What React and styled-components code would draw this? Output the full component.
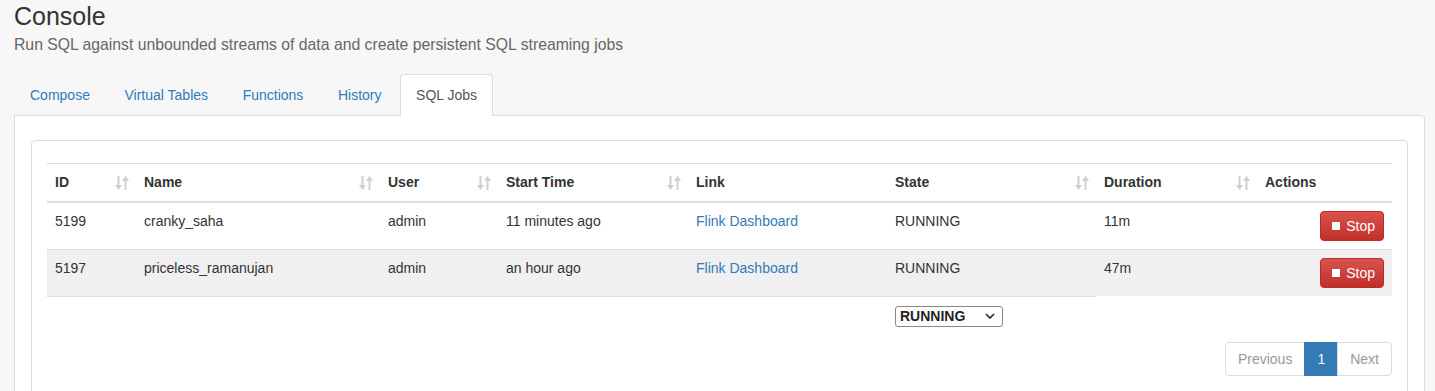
import React from "react";
import styled, { createGlobalStyle } from "styled-components";

const GlobalStyle = createGlobalStyle`
  body {
    margin: 0;
    background: #f7f7f7;
    font-family: "Liberation Sans", Arial, sans-serif;
    font-size: 14px;
    color: #333;
  }
`;

const Page = styled.div`
  padding: 0 10px 0 14px;
`;

const Title = styled.h1`
  margin: 0;
  padding-top: 2px;
  font-size: 25px;
  line-height: 28px;
  font-weight: 400;
  color: #333;
`;

const Subtitle = styled.p`
  margin: 4px 0 0;
  font-size: 15.75px;
  line-height: 22px;
  color: #666;
`;

const TabBar = styled.ul`
  display: flex;
  list-style: none;
  margin: 18px 0 0;
  padding: 0;
`;

const Tab = styled.li`
  margin-right: 2.6px;
  margin-bottom: -1px;
  padding: 10px 15px;
  line-height: 20px;
  font-size: 14px;
  border: 1px solid ${(p) => (p.$active ? "#ddd" : "transparent")};
  border-bottom-color: transparent;
  border-radius: 4px 4px 0 0;
  background: ${(p) => (p.$active ? "#fff" : "transparent")};
  color: ${(p) => (p.$active ? "#555" : "#337ab7")};
  position: relative;
  z-index: 1;
`;

const TabContent = styled.div`
  background: #fff;
  border: 1px solid #ddd;
  border-radius: 0 4px 4px 4px;
  padding: 24px 16px 30px;
`;

const Panel = styled.div`
  border: 1px solid #ddd;
  border-radius: 4px;
  padding: 22px 15px 30px;
`;

const Table = styled.table`
  width: 100%;
  border-collapse: collapse;
  table-layout: fixed;
`;

const Th = styled.th`
  position: relative;
  text-align: left;
  font-weight: 700;
  padding: 8px;
  line-height: 21px;
  border-top: 1px solid #ddd;
  border-bottom: 2px solid #ddd;
`;

const Row = styled.tr`
  background: ${(p) => (p.$striped ? "#f0f0f0" : "#fff")};
`;

const Td = styled.td`
  padding: 8px;
  line-height: 20px;
  vertical-align: top;
  border-top: 1px solid #ddd;
  text-align: ${(p) => p.$align || "left"};
`;

const FootCell = styled.td`
  padding: 9px 8px 8px;
  line-height: 20px;
  border-top: ${(p) => (p.$line ? "1px solid #ddd" : "none")};
`;

const SortIcon = styled.svg`
  position: absolute;
  right: 7px;
  top: 11px;
`;

const Link = styled.a`
  color: #337ab7;
  text-decoration: none;
`;

const StopButton = styled.button`
  display: inline-flex;
  align-items: center;
  gap: 6px;
  height: 30px;
  padding: 0 8px 0 11px;
  font-family: inherit;
  font-size: 14px;
  line-height: 20px;
  color: #fff;
  background: linear-gradient(#d9534f, #c12e2a);
  border: 1px solid #b92c28;
  border-radius: 4px;
`;

const StopSquare = styled.span`
  width: 8px;
  height: 8px;
  background: #fff;
`;

const StateSelect = styled.select`
  appearance: none;
  width: 108px;
  height: 21px;
  padding: 0 20px 0 4px;
  font-family: inherit;
  font-size: 14px;
  font-weight: 700;
  color: #222;
  border: 1px solid #888;
  border-radius: 3px;
  background: #fff url("data:image/svg+xml;utf8,<svg xmlns='http://www.w3.org/2000/svg' width='10' height='6'><path d='M1 1l4 4 4-4' fill='none' stroke='%23222' stroke-width='1.6'/></svg>") no-repeat right 7px center;
`;

const Pager = styled.div`
  display: flex;
  justify-content: flex-end;
  margin-top: 7px;
`;

const PageItem = styled.span`
  padding: 6px 12px;
  line-height: 20px;
  font-size: 14px;
  border: 1px solid ${(p) => (p.$active ? "#337ab7" : "#ddd")};
  margin-left: -1px;
  background: ${(p) => (p.$active ? "#337ab7" : "#fff")};
  color: ${(p) => (p.$active ? "#fff" : "#999")};
  &:first-child {
    border-radius: 4px 0 0 4px;
  }
  &:last-child {
    border-radius: 0 4px 4px 0;
  }
`;

const Sort = () => (
  <SortIcon width="14" height="16" viewBox="0 0 14 16">
    <rect x="2.5" y="1" width="2" height="10" fill="#cfcfcf" />
    <path d="M0 10h7l-3.5 5z" fill="#cfcfcf" />
    <rect x="9.5" y="5" width="2" height="10" fill="#cfcfcf" />
    <path d="M7 6h7L10.5 1z" fill="#cfcfcf" />
  </SortIcon>
);

const columns = [
  { label: "ID", width: 89, sort: true },
  { label: "Name", width: 244, sort: true },
  { label: "User", width: 118, sort: true },
  { label: "Start Time", width: 190, sort: true },
  { label: "Link", width: 199 },
  { label: "State", width: 209, sort: true },
  { label: "Duration", width: 161, sort: true },
  { label: "Actions", width: 135 },
];

const jobs = [
  { id: 5199, name: "cranky_saha", user: "admin", start: "11 minutes ago", state: "RUNNING", duration: "11m" },
  { id: 5197, name: "priceless_ramanujan", user: "admin", start: "an hour ago", state: "RUNNING", duration: "47m" },
];

const tabs = ["Compose", "Virtual Tables", "Functions", "History", "SQL Jobs"];

export default function App() {
  return (
    <Page>
      <GlobalStyle />
      <Title>Console</Title>
      <Subtitle>Run SQL against unbounded streams of data and create persistent SQL streaming jobs</Subtitle>
      <TabBar>
        {tabs.map((t) => (
          <Tab key={t} $active={t === "SQL Jobs"}>{t}</Tab>
        ))}
      </TabBar>
      <TabContent>
        <Panel>
          <Table>
            <colgroup>
              {columns.map((c) => (
                <col key={c.label} style={{ width: c.width }} />
              ))}
            </colgroup>
            <thead>
              <tr>
                {columns.map((c) => (
                  <Th key={c.label}>
                    {c.label}
                    {c.sort && <Sort />}
                  </Th>
                ))}
              </tr>
            </thead>
            <tbody>
              {jobs.map((j, i) => (
                <Row key={j.id} $striped={i % 2 === 1}>
                  <Td>{j.id}</Td>
                  <Td>{j.name}</Td>
                  <Td>{j.user}</Td>
                  <Td>{j.start}</Td>
                  <Td><Link href="#">Flink Dashboard</Link></Td>
                  <Td>{j.state}</Td>
                  <Td>{j.duration}</Td>
                  <Td $align="right">
                    <StopButton><StopSquare />Stop</StopButton>
                  </Td>
                </Row>
              ))}
            </tbody>
            <tfoot>
              <tr>
                <FootCell $line />
                <FootCell $line />
                <FootCell $line />
                <FootCell $line />
                <FootCell $line />
                <FootCell $line>
                  <StateSelect defaultValue="RUNNING">
                    <option>RUNNING</option>
                    <option>FINISHED</option>
                    <option>FAILED</option>
                  </StateSelect>
                </FootCell>
                <FootCell />
                <FootCell />
              </tr>
            </tfoot>
          </Table>
          <Pager>
            <PageItem>Previous</PageItem>
            <PageItem $active>1</PageItem>
            <PageItem>Next</PageItem>
          </Pager>
        </Panel>
      </TabContent>
    </Page>
  );
}
